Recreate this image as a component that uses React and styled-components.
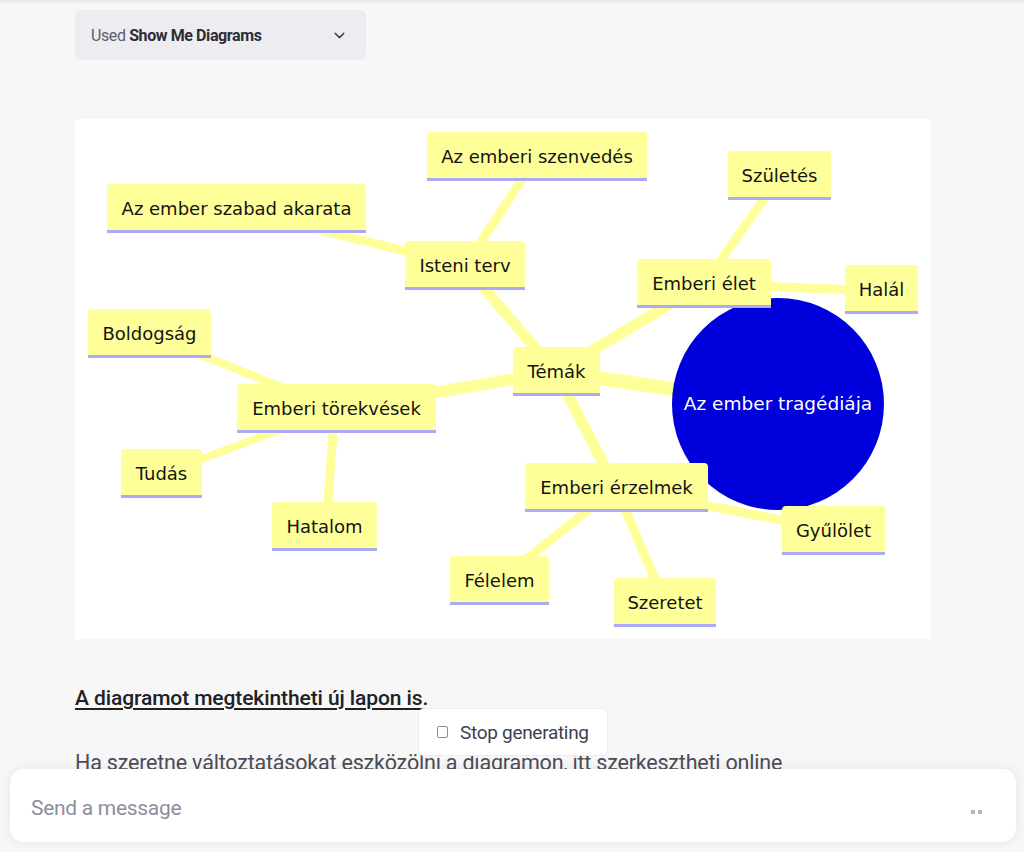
import React from 'react'
import styled, { createGlobalStyle } from 'styled-components'
import { ChevronDown } from 'lucide-react'

const GlobalStyle = createGlobalStyle`
  html, body {
    margin: 0;
    padding: 0;
    background: #f7f7f8;
    font-family: Roboto, "Liberation Sans", sans-serif;
    overflow: hidden;
  }
`

// diagram data, coordinates inside the 856x520 image
const nodes = [
  { label: 'Az emberi szenvedés', x: 352, y: 13, w: 220 },
  { label: 'Az ember szabad akarata', x: 32, y: 65, w: 259 },
  { label: 'Születés', x: 653, y: 32, w: 103 },
  { label: 'Isteni terv', x: 330, y: 122, w: 120 },
  { label: 'Emberi élet', x: 562, y: 140, w: 134 },
  { label: 'Halál', x: 770, y: 146, w: 73 },
  { label: 'Boldogság', x: 13, y: 190, w: 123 },
  { label: 'Témák', x: 438, y: 228, w: 87 },
  { label: 'Emberi törekvések', x: 162, y: 265, w: 199 },
  { label: 'Tudás', x: 46, y: 330, w: 81 },
  { label: 'Hatalom', x: 197, y: 383, w: 105 },
  { label: 'Emberi érzelmek', x: 450, y: 344, w: 183 },
  { label: 'Gyűlölet', x: 707, y: 387, w: 103 },
  { label: 'Félelem', x: 375, y: 437, w: 99 },
  { label: 'Szeretet', x: 539, y: 459, w: 102 },
]

const edges = [
  [481, 253, 390, 147, 11],
  [481, 253, 629, 165, 11],
  [481, 253, 703, 285, 14],
  [481, 253, 261, 290, 12],
  [481, 253, 541, 369, 11],
  [390, 147, 462, 38, 9],
  [390, 147, 161, 90, 9],
  [629, 165, 705, 57, 9],
  [629, 165, 806, 172, 9],
  [261, 290, 74, 215, 8],
  [261, 290, 86, 355, 8],
  [259, 300, 252, 396, 9],
  [541, 369, 758, 411, 9],
  [541, 369, 424, 462, 9],
  [541, 369, 590, 484, 9],
]

const NODE_H = 49
const DIAGRAM_FONT = "'DejaVu Sans', Verdana, sans-serif"

const MindMap = () => (
  <svg width="856" height="520" viewBox="0 0 856 520">
    {edges.map(([x1, y1, x2, y2, w], i) => (
      <line key={i} x1={x1} y1={y1} x2={x2} y2={y2} stroke="#ffff99" strokeWidth={w} />
    ))}
    <circle cx="703" cy="285" r="106" fill="#0000dc" />
    <text x="703" y="291" textAnchor="middle" fill="#fff" fontFamily={DIAGRAM_FONT} fontSize="18.5">
      Az ember tragédiája
    </text>
    {nodes.map((n) => (
      <g key={n.label}>
        <rect x={n.x} y={n.y} width={n.w} height={NODE_H} rx="4" fill="#ffff99" />
        <rect x={n.x} y={n.y + 20} width={n.w} height={NODE_H - 20} fill="#ffff99" />
        <rect x={n.x} y={n.y + NODE_H - 3} width={n.w} height="3" fill="#aaaaf5" />
        <text
          x={n.x + n.w / 2}
          y={n.y + 31}
          textAnchor="middle"
          fill="#141414"
          fontFamily={DIAGRAM_FONT}
          fontSize="18"
        >
          {n.label}
        </text>
      </g>
    ))}
  </svg>
)

export default function App() {
  return (
    <Page>
      <GlobalStyle />
      <TopEdge />
      <Column>
        <ToolPill>
          <span>
            Used <b>Show Me Diagrams</b>
          </span>
          <ChevronDown size={17} strokeWidth={2} color="#40414f" />
        </ToolPill>
        <DiagramFrame>
          <MindMap />
        </DiagramFrame>
        <LinkText href="#">A diagramot megtekintheti új lapon is.</LinkText>
        <Para>Ha szeretne változtatásokat eszközölni a diagramon, itt szerkesztheti online</Para>
      </Column>
      <StopButton>
        <StopIcon />
        Stop generating
      </StopButton>
      <Composer>
        <Placeholder>Send a message</Placeholder>
        <Dots>
          <i />
          <i />
        </Dots>
      </Composer>
    </Page>
  )
}

const Page = styled.div`
position: relative;
height: 852px;
background: #f7f7f8;
overflow: hidden;
`

const TopEdge = styled.div`
height: 3px;
background: linear-gradient(#e6e6e6, #f1f1f1);
`

const Column = styled.div`
display: flex;
flex-direction: column;
align-items: flex-start;
padding: 7px 0 0 75px;
width: 856px;
`

const ToolPill = styled.div`
display: flex;
align-items: center;
justify-content: space-between;
box-sizing: border-box;
width: 291px;
height: 50px;
padding: 0 18px 0 16px;
background: #ececf1;
border-radius: 6px;
font-size: 16px;
letter-spacing: -0.4px;
color: #5d5d6b;
b {
  color: #2d2d36;
  font-weight: 700;
}
`

const DiagramFrame = styled.div`
margin-top: 59px;
width: 856px;
height: 520px;
background: #fff;
line-height: 0;
`

const LinkText = styled.a`
margin-top: 47px;
font-size: 21px;
font-weight: 500;
letter-spacing: -0.1px;
color: #202123;
text-decoration: underline;
text-underline-offset: 3px;
text-decoration-thickness: 1.5px;
`

const Para = styled.p`
margin: 40px 0 0;
font-size: 21.5px;
letter-spacing: -0.2px;
color: #4b4c57;
white-space: nowrap;
`

const StopButton = styled.div`
position: absolute;
left: 418px;
top: 708px;
box-sizing: border-box;
width: 190px;
height: 48px;
display: flex;
align-items: center;
gap: 12px;
padding-left: 18px;
background: #fff;
border: 1px solid #ececf1;
border-radius: 6px;
font-size: 19px;
letter-spacing: -0.3px;
color: #40414f;
z-index: 3;
`

const StopIcon = styled.span`
width: 9px;
height: 10px;
border: 1.5px solid #8e8ea0;
border-radius: 2px;
`

const Composer = styled.div`
position: absolute;
left: 10px;
top: 769px;
box-sizing: border-box;
width: 1006px;
height: 73px;
display: flex;
align-items: center;
justify-content: space-between;
padding: 0 34px 0 21px;
background: #fff;
border-radius: 14px;
box-shadow: 0 0 12px rgba(0, 0, 0, 0.08);
z-index: 2;
`

const Placeholder = styled.span`
font-size: 21px;
letter-spacing: -0.3px;
color: #8e8ea0;
margin-top: 4px;
`

const Dots = styled.span`
display: flex;
gap: 3px;
margin-top: 12px;
i {
  width: 4px;
  height: 4px;
  background: #b4b4c4;
}
`
